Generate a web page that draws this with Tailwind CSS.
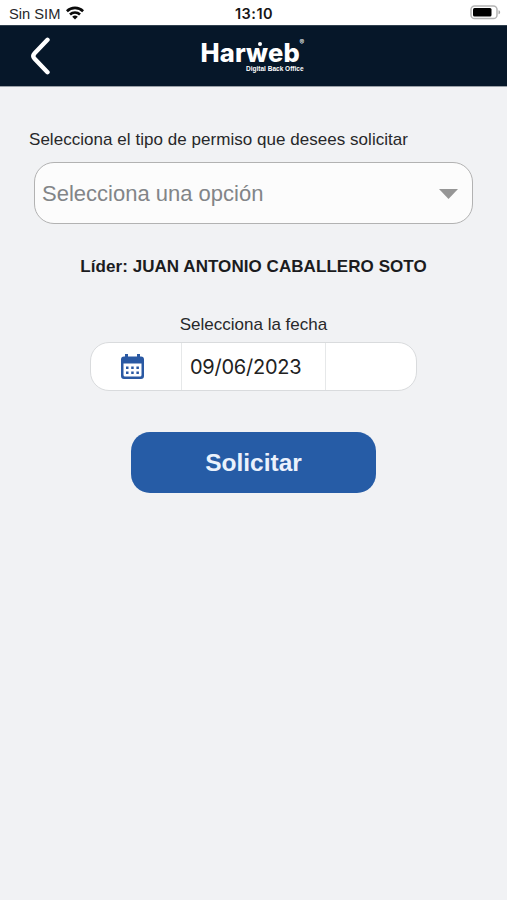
<!DOCTYPE html>
<html lang="es">
<head>
    <meta charset="UTF-8">
    <meta name="viewport" content="width=device-width, initial-scale=1">
    <title>Harweb - Solicitar permiso</title>
    <script src="https://cdn.jsdelivr.net/npm/@tailwindcss/browser@4"></script>
</head>
<body class="min-h-screen bg-[#f1f2f4] font-['Liberation_Sans',sans-serif] text-[#27282a]">
    <!-- barra de estado -->
    <div class="grid h-[25px] grid-cols-3 items-center bg-white pl-[9px] pr-[6px]">
        <div class="flex items-center gap-[6px] pt-[3px]">
            <span class="text-[14.7px] leading-[16px]">Sin SIM</span>
            <svg class="-mt-[3px] h-[14px] w-[18px]" viewBox="0 0 18 14" fill="none" stroke="#0a0a0a" stroke-width="2.6">
                <path d="M.9 5.2a11.6 11.6 0 0 1 16.2 0"/>
                <path d="M4 8.5a7.2 7.2 0 0 1 10 0"/>
                <path d="M9 13.6 6.2 10.8a4 4 0 0 1 5.6 0z" fill="#0a0a0a" stroke="none"/>
            </svg>
        </div>
        <div class="pt-[3px] pr-[2px] text-center font-['Inter',sans-serif] text-[14.5px] leading-none font-semibold tracking-[.5px] text-[#161616]">13:10</div>
        <svg class="h-[15px] w-[31px] justify-self-end" viewBox="0 0 31 15">
            <rect x="1" y="1" width="26" height="12.5" rx="3.6" fill="#fff" stroke="#b4b4b4" stroke-width="1.5"/>
            <rect x="3" y="3" width="18.5" height="8.5" rx="1.5" fill="#000"/>
            <path d="M28.5 5.2c2.2.6 2.2 3.5 0 4.1z" fill="#a8a8a8"/>
        </svg>
    </div>

    <!-- cabecera -->
    <header class="grid h-[62px] grid-cols-3 items-center border-t border-b border-t-[#30404e] border-b-[#9aa0a7] bg-[#061729]">
        <a href="#" class="pl-[30px]" aria-label="Volver">
            <svg class="h-[38px] w-[21px]" viewBox="0 0 21 38" fill="none" stroke="#fff" stroke-width="4.4" stroke-linecap="round" stroke-linejoin="round">
                <path d="M17.5 2.8 4.6 16.2q-2.600 2.800 0 5.600L17.5 35.2"/>
            </svg>
        </a>
        <div class="flex h-[34px] w-[106px] flex-col justify-self-center text-white">
            <div class="relative h-[25px] font-['Inter',sans-serif] text-[25.5px] leading-[27px] font-extrabold tracking-[.2px]">
                Harweb
                <span class="absolute top-[3px] left-[57px] size-[4px] rounded-full bg-white"></span>
                <span class="absolute top-0 left-[99px] text-[7px] leading-[8px] font-normal tracking-normal">®</span>
            </div>
            <span class="pr-[3px] text-right text-[6.5px] leading-[9px] font-bold whitespace-nowrap">Digital Back Office</span>
        </div>
    </header>

    <main class="flex flex-col items-center">
        <label class="mt-[43px] self-start pl-[29px] text-[17px] leading-[20px] tracking-[.04px] whitespace-nowrap">Selecciona el tipo de permiso que desees solicitar</label>
        <div class="mt-[12px] flex h-[62px] w-[439px] items-center justify-between rounded-[20px] border-[1.5px] border-[#b2b2b2] bg-[#fcfcfc] pt-px pr-[14px] pl-[7px]">
            <span class="text-[22px] leading-none text-[#828588]">Selecciona una opción</span>
            <svg class="h-[10px] w-[19px]" viewBox="0 0 19 10" fill="#969696"><path d="M0 0h19L9.5 10z"/></svg>
        </div>

        <p class="mt-[33px] text-[17px] leading-[20px] font-bold tracking-[.06px] whitespace-nowrap text-[#1b1c1e]">Líder: JUAN ANTONIO CABALLERO SOTO</p>

        <label class="mt-[38px] text-[17px] leading-[20px]">Selecciona la fecha</label>
        <div class="mt-[7px] flex h-[49px] w-[327px] overflow-hidden rounded-[19px] border border-[#d9dbdd] bg-white">
            <div class="flex w-[90px] items-center pl-[30px]">
                <svg class="h-[25px] w-[23px]" viewBox="0 0 23 25">
                    <path d="M3 2.500h1V0h3v2.500h9V0h3v2.500h1a3 3 0 0 1 3 3V22a3 3 0 0 1-3 3H3a3 3 0 0 1-3-3V5.500a3 3 0 0 1 3-3z" fill="#2a59a3"/>
                    <path d="M2.500 9.500h18V21a1.500 1.500 0 0 1-1.500 1.500H4A1.500 1.500 0 0 1 2.500 21z" fill="#fff"/>
                    <path d="M5 12.500h2.500v2.500H5zM10.200 12.500h2.500v2.500h-2.500zM15.400 12.500h2.500v2.500h-2.500zM5 17.500h2.500V20H5zM10.200 17.500h2.500V20h-2.500zM15.400 17.500h2.500V20h-2.500z" fill="#2a59a3"/>
                </svg>
            </div>
            <div class="flex w-[145px] items-center border-x border-[#e6e8e9] pl-[8px]">
                <span class="font-['Inter',sans-serif] text-[20px] leading-none tracking-[-.25px] text-[#222]">09/06/2023</span>
            </div>
        </div>

        <button class="mt-[41px] h-[61px] w-[245px] rounded-[19px] bg-[#265ca6] pt-[2px] text-[24.5px] leading-none font-bold text-[#eaf1fc]">Solicitar</button>
    </main>
</body>
</html>
